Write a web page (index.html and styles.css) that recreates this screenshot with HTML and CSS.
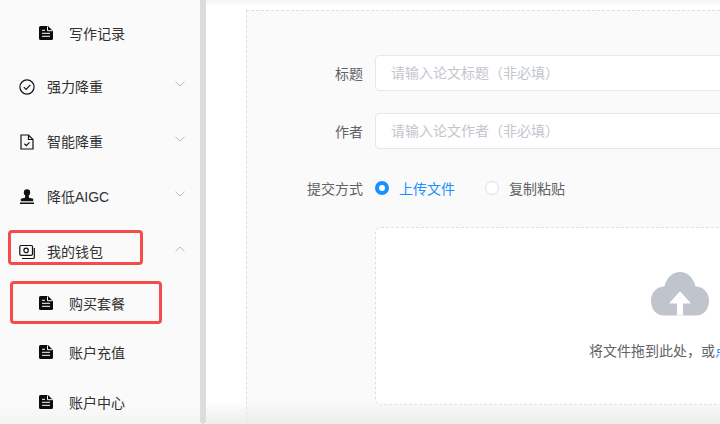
FILE: index.html
```html
<!DOCTYPE html>
<html lang="zh-CN">
<head>
<meta charset="utf-8">
<title>购买套餐</title>
<link rel="stylesheet" href="styles.css">
</head>
<body>
<div class="page">
  <aside class="sidebar">
    <nav class="menu">
      <a class="item sub first">
        <svg class="doc" viewBox="0 0 14 14"><path d="M2 0h7l5 5v7.500a1.500 1.500 0 0 1-1.500 1.500h-11A1.500 1.500 0 0 1 0 12.500v-11A1.500 1.500 0 0 1 1.500 0z"/><path class="cut" d="M3 7.300h8M3 10.300h8M3 4.300h3M8.500.5v4.200h5"/></svg>
        <span>写作记录</span>
      </a>
      <a class="item top t1">
        <svg class="ico" viewBox="0 0 16 16"><circle cx="8" cy="8" r="7.100"/><path d="M4.800 8.200l2.300 2.300 4.200-4.600"/></svg>
        <span class="grow">强力降重</span>
        <svg class="chev" viewBox="0 0 10 6"><path d="M.5.800L5 5 9.500.800"/></svg>
      </a>
      <a class="item top">
        <svg class="ico" viewBox="0 0 16 16"><path d="M2 1h7.500l4.500 4.500V15H2z"/><path d="M9.500 1v4.500H14"/><path d="M5.400 9.800l1.900 1.800 3.200-3.200"/></svg>
        <span class="grow">智能降重</span>
        <svg class="chev" viewBox="0 0 10 6"><path d="M.5.800L5 5 9.500.800"/></svg>
      </a>
      <a class="item top">
        <svg class="ico solid" viewBox="0 0 16 16"><circle cx="8" cy="3.400" r="3.200"/><path d="M6.300 5.500h3.400l.3 3.300 4.200.9v2.500H1.800V9.700L6 8.800z"/><path d="M1 13.500h14V15H1z"/></svg>
        <span class="grow">降低AIGC</span>
        <svg class="chev" viewBox="0 0 10 6"><path d="M.5.800L5 5 9.500.800"/></svg>
      </a>
      <a class="item top">
        <svg class="ico" viewBox="0 0 16 16"><rect x=".8" y="1.500" width="12.700" height="9.800" rx="1.200"/><circle cx="7.100" cy="6.400" r="2.200"/><path d="M15.300 4v9.500a1 1 0 0 1-1 1H3"/></svg>
        <span class="grow">我的钱包</span>
        <svg class="chev" viewBox="0 0 10 6"><path d="M.5 5.200L5 1l4.500 4.200"/></svg>
      </a>
      <a class="item sub s1">
        <svg class="doc" viewBox="0 0 14 14"><path d="M2 0h7l5 5v7.500a1.500 1.500 0 0 1-1.500 1.500h-11A1.500 1.500 0 0 1 0 12.500v-11A1.500 1.500 0 0 1 1.500 0z"/><path class="cut" d="M3 7.300h8M3 10.300h8M3 4.300h3M8.500.5v4.200h5"/></svg>
        <span>购买套餐</span>
      </a>
      <a class="item sub s2">
        <svg class="doc" viewBox="0 0 14 14"><path d="M2 0h7l5 5v7.500a1.500 1.500 0 0 1-1.500 1.500h-11A1.500 1.500 0 0 1 0 12.500v-11A1.500 1.500 0 0 1 1.500 0z"/><path class="cut" d="M3 7.300h8M3 10.300h8M3 4.300h3M8.500.5v4.200h5"/></svg>
        <span>账户充值</span>
      </a>
      <a class="item sub s3">
        <svg class="doc" viewBox="0 0 14 14"><path d="M2 0h7l5 5v7.500a1.500 1.500 0 0 1-1.500 1.500h-11A1.500 1.500 0 0 1 0 12.500v-11A1.500 1.500 0 0 1 1.500 0z"/><path class="cut" d="M3 7.300h8M3 10.300h8M3 4.300h3M8.500.5v4.200h5"/></svg>
        <span>账户中心</span>
      </a>
    </nav>
    <div class="mark mark-a"></div>
    <div class="mark mark-b"></div>
  </aside>
  <div class="scrollbar"></div>
  <main class="main">
    <form class="panel">
      <div class="row field">
        <label class="label">标题</label>
        <div class="input">请输入论文标题（非必填）</div>
      </div>
      <div class="row field">
        <label class="label">作者</label>
        <div class="input">请输入论文作者（非必填）</div>
      </div>
      <div class="row radios">
        <label class="label">提交方式</label>
        <span class="radio on"></span><span class="radio-text active">上传文件</span>
        <span class="radio"></span><span class="radio-text">复制粘贴</span>
      </div>
      <div class="row">
        <div class="label"></div>
        <div class="drop">
          <svg class="cloud" viewBox="0 0 58 44"><path class="cloud-body" d="M13 43.500C5.500 43.500 0 38 0 28.500 0 20 6 14.800 13.500 14.200 15.500 6 21.500 0 29 0s13.500 6 15.500 14.200C52 14.800 58 20 58 28.500 58 38 52.500 43.500 45 43.500z"/><path class="cloud-arrow" d="M29 19.200L40 31.500H32V43.500H26V31.500H18z"/></svg>
          <p class="hint">将文件拖到此处，或<em>点击上传</em></p>
        </div>
      </div>
    </form>
  </main>
  <div class="shade-top"></div>
  <div class="fade"></div>
</div>
</body>
</html>
```
FILE: styles.css
```css
html, body { margin: 0; padding: 0; }
body { width: 720px; height: 424px; overflow: hidden; background: #fff; font-family: "Liberation Sans", "Noto Sans CJK SC", sans-serif; }
.page { position: relative; display: flex; width: 720px; height: 424px; overflow: hidden; }

.sidebar { position: relative; flex: 0 0 200px; background: linear-gradient(to bottom, #fafafa 400px, #f5f5f5 424px); }
.scrollbar { flex: 0 0 6px; background: #dcdcde; border-radius: 0 0 3px 3px; }
.menu { display: flex; flex-direction: column; padding-top: 24px; }
.item { display: flex; align-items: center; height: 20px; color: #303133; font-size: 14px; line-height: 20px; }
.top { padding-left: 19px; padding-right: 15px; margin-top: 35px; }
.t1 { margin-top: 33px; }
.sub { padding-left: 39px; }
.first { margin-top: 0; }
.s1 { margin-top: 32px; }
.s2 { margin-top: 29px; }
.s3 { margin-top: 30px; }
.grow { flex: 1; margin-left: 12px; }
.sub span { margin-left: 16px; }
.ico { width: 16px; height: 16px; fill: none; stroke: #111; stroke-width: 1.200; }
.ico.solid { fill: #111; stroke: none; }
.doc { width: 14px; height: 14px; fill: #0c0c0c; margin-top: -2px; }
.doc .cut { fill: none; stroke: #fff; stroke-width: 1; }
.chev { width: 10px; height: 6px; fill: none; stroke: #b8bac0; stroke-width: 1; margin-top: -6px; }

.mark { position: absolute; border: 3px solid #f54b4b; border-radius: 4px; box-sizing: border-box; }
.mark-a { left: 8px; top: 230px; width: 135px; height: 35px; }
.mark-b { left: 10px; top: 281px; width: 152px; height: 43px; }

.main { flex: 1; min-width: 0; padding: 10px 0 0 40px; }
.panel { width: 760px; height: 500px; box-sizing: border-box; background: #fafafa; border: 1px dashed #dcdfe6; padding-top: 44px; }
.row { display: flex; align-items: center; }
.field { height: 36px; margin-bottom: 22px; }
.radios { height: 20px; margin-top: 29px; margin-bottom: 29px; }
.row .label { flex: 0 0 116px; text-align: right; color: #606266; font-size: 14px; margin-right: 12px; }
.input { flex: 0 0 610px; height: 36px; box-sizing: border-box; background: #fff; border: 1px solid #e4e7ed; border-radius: 4px; padding-left: 15px; line-height: 34px; font-size: 14px; color: #c3c6cc; }
.radio { width: 14px; height: 14px; box-sizing: border-box; border: 1px solid #dcdfe6; border-radius: 50%; background: #fff; }
.radio.on { border: 4.500px solid #1890ff; }
.radio-text { margin-left: 10px; margin-right: 30px; font-size: 14px; color: #606266; }
.radio-text.active { color: #1890ff; }
.drop { flex: 0 0 610px; height: 178px; box-sizing: border-box; background: #fff; border: 1px dashed #dcdfe6; border-radius: 6px; display: flex; flex-direction: column; align-items: center; }
.cloud { width: 58px; height: 44px; margin-top: 44px; }
.cloud-body { fill: #c0c4cc; }
.cloud-arrow { fill: #fff; }
.hint { margin: 25px 0 0; font-size: 14px; line-height: 20px; color: #606266; }
.hint em { font-style: normal; color: #1890ff; }

.shade-top { position: absolute; left: 206px; right: 0; top: 0; height: 6px; background: linear-gradient(to bottom, rgba(236,236,236,.55), rgba(236,236,236,0)); }
.fade { position: absolute; left: 206px; right: 0; bottom: 0; height: 24px; background: linear-gradient(to bottom, rgba(236,236,236,0), rgba(236,236,236,.95)); }
```
